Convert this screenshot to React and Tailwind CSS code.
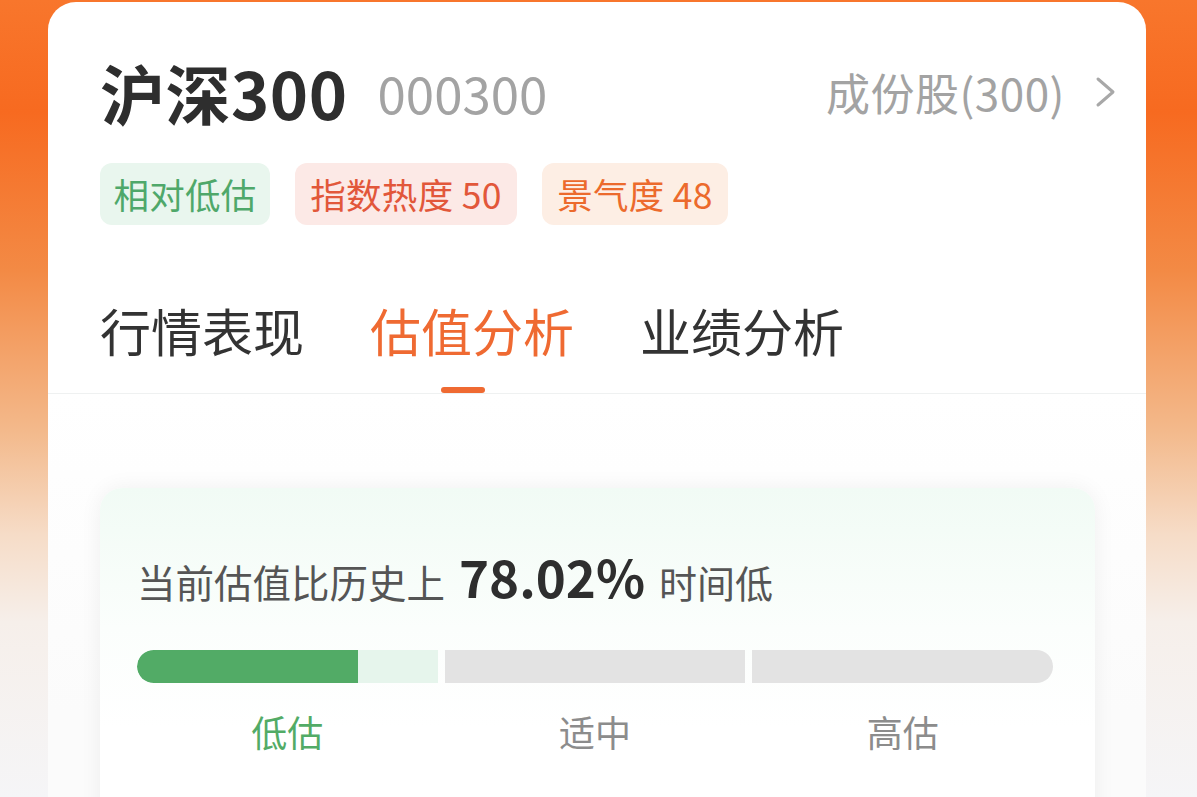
import React from "react";

const TAGS = [
  { label: "相对低估", w: "w-[170px]", cls: "bg-[#e9f6ee] text-[#4fa86a]" },
  { label: "指数热度 50", w: "w-[222px]", cls: "bg-[#fce9e6] text-[#e2573a]" },
  { label: "景气度 48", w: "w-[186px]", cls: "bg-[#fdeee4] text-[#ec6a2c]" },
];

const TABS = ["行情表现", "估值分析", "业绩分析"];

export default function App() {
  const active = 1;
  const fill = 73.4; // percent of the first segment

  return (
    <div
      className="min-h-screen w-full bg-[linear-gradient(180deg,#f8762c_0%,#f76a20_14%,#f38a45_34%,#f3b98b_54%,#f6dcc7_67%,#f6efea_78%,#f5f5f7_100%)] pt-[2px] pl-[48px]"
      style={{ fontFamily: '"Noto Sans CJK SC", "Noto Sans", sans-serif' }}
    >
      <div className="w-[1098px] h-[795px] overflow-hidden rounded-t-[28px] bg-white">
        {/* header */}
        <div className="mt-[50px] h-[80px] flex items-center pl-[52px] pr-[29px]">
          <span className="text-[65px] font-semibold text-[#2e2e2e] leading-none tracking-[0.5px]">沪深300</span>
          <span className="ml-[30px] text-[51px] text-[#a3a3a3] leading-none">000300</span>
          <div className="ml-auto flex items-center text-[#a3a3a3]">
            <span className="text-[44px] leading-none tracking-[0.5px]">成份股(300)</span>
            <svg width="22" height="32" viewBox="0 0 22 32" className="ml-[30px]">
              <polyline points="3,3 18,16 3,29" fill="none" stroke="#a8a8a8" strokeWidth="3" strokeLinecap="round" strokeLinejoin="round" />
            </svg>
          </div>
        </div>

        {/* tags */}
        <div className="mt-[31px] flex gap-[25px] pl-[52px]">
          {TAGS.map((t) => (
            <div key={t.label} className={`${t.w} h-[62px] rounded-[12px] flex items-center justify-center text-[35.5px] leading-none tracking-[0.3px] ${t.cls}`}>
              {t.label}
            </div>
          ))}
        </div>

        {/* tabs */}
        <div className="mt-[81px] flex gap-[66px] pl-[52px] border-b border-[#eff1f1]">
          {TABS.map((t, i) => (
            <div key={t} className="flex flex-col items-center">
              <span className={`text-[51px] leading-[48px] ${i === active ? "text-[#ef6a32]" : "text-[#333]"}`}>{t}</span>
              <div className={`mt-[33px] h-[6px] w-[44px] -translate-x-[9px] rounded-full ${i === active ? "bg-[#ef6a32]" : "bg-transparent"}`} />
            </div>
          ))}
        </div>

        {/* body */}
        <div className="h-full bg-[linear-gradient(180deg,#ffffff_0%,#fbfbfb_40%)] pt-[94px] pl-[52px]">
          <div className="w-[995px] h-[400px] rounded-[22px] bg-[linear-gradient(180deg,#f1fbf5_0%,#fbfefc_35%,#ffffff_60%)] shadow-[0_0_22px_rgba(0,0,0,0.06)] pt-[63px] px-[37px]">
            <div className="flex items-baseline text-[#555]">
              <span className="text-[38.5px] leading-none">当前估值比历史上</span>
              <span className="ml-[14px] text-[51px] font-semibold text-[#2e2e2e] leading-none">78.02%</span>
              <span className="ml-[14px] text-[38px] leading-none">时间低</span>
            </div>

            <div className="mt-[48px] flex gap-[7px] w-[916px]">
              <div className="flex-1 h-[33px] rounded-l-full bg-[#e6f5ec] overflow-hidden flex">
                <div className="h-full bg-[#52ab66] rounded-l-full" style={{ width: `${fill}%` }} />
              </div>
              <div className="flex-1 h-[33px] bg-[#e3e3e3]" />
              <div className="flex-1 h-[33px] rounded-r-full bg-[#e3e3e3]" />
            </div>

            <div className="mt-[24px] flex gap-[7px] w-[916px]">
              <div className="flex-1 text-center text-[36px] leading-[48px] text-[#52ab66]">低估</div>
              <div className="flex-1 text-center text-[36px] leading-[48px] text-[#8c8c8c]">适中</div>
              <div className="flex-1 text-center text-[36px] leading-[48px] text-[#8c8c8c]">高估</div>
            </div>
          </div>
        </div>
      </div>
    </div>
  );
}
